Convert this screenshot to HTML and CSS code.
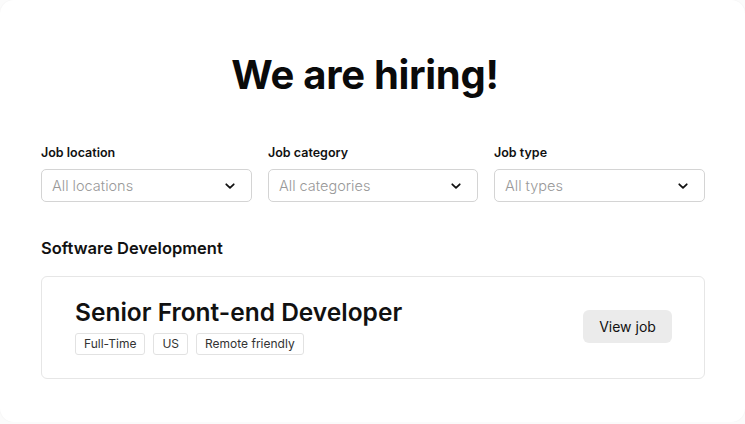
FILE: index.html
```html
<!DOCTYPE html>
<html>
<head>
<meta charset="utf-8">
<link rel="stylesheet" href="styles.css">
</head>
<body>
<div class="page">
  <h1 class="title">We are hiring!</h1>
  <div class="filters">
    <div class="field">
      <label class="label">Job location</label>
      <div class="select"><span>All locations</span>
        <svg class="chev" width="10" height="6" viewBox="0 0 10 6"><path d="M1.3 1.3l3.7 3.5 3.7-3.5" fill="none" stroke="#111" stroke-width="1.8" stroke-linecap="round" stroke-linejoin="round"/></svg>
      </div>
    </div>
    <div class="field">
      <label class="label">Job category</label>
      <div class="select"><span>All categories</span>
        <svg class="chev" width="10" height="6" viewBox="0 0 10 6"><path d="M1.3 1.3l3.7 3.5 3.7-3.5" fill="none" stroke="#111" stroke-width="1.8" stroke-linecap="round" stroke-linejoin="round"/></svg>
      </div>
    </div>
    <div class="field">
      <label class="label">Job type</label>
      <div class="select"><span>All types</span>
        <svg class="chev" width="10" height="6" viewBox="0 0 10 6"><path d="M1.3 1.3l3.7 3.5 3.7-3.5" fill="none" stroke="#111" stroke-width="1.8" stroke-linecap="round" stroke-linejoin="round"/></svg>
      </div>
    </div>
  </div>
  <h2 class="section">Software Development</h2>
  <div class="job">
    <div class="job-info">
      <h3 class="job-title">Senior Front-end Developer</h3>
      <div class="tags">
        <span class="tag">Full-Time</span>
        <span class="tag">US</span>
        <span class="tag">Remote friendly</span>
      </div>
    </div>
    <a class="btn">View job</a>
  </div>
</div>
</body>
</html>
```
FILE: styles.css
```css
* { box-sizing: border-box; }
html, body { margin: 0; padding: 0; background: #fbfbfb; }
body { font-family: Inter, "Liberation Sans", sans-serif; color: #111; }
.page {
  width: 745px;
  height: 422px;
  background: #fff;
  border-radius: 14px;
  box-shadow: 0 0 2px rgba(0,0,0,0.05);
  padding: 52px 40px 0 41px;
}
.title {
  margin: 0;
  padding-right: 16px;
  text-align: center;
  font-size: 40px;
  font-weight: 700;
  letter-spacing: -0.3px;
  line-height: 46px;
  color: #0a0a0a;
}
.filters {
  display: grid;
  grid-template-columns: 211px 210px 211px;
  column-gap: 16px;
  margin-top: 47px;
}
.label {
  display: block;
  font-size: 12.5px;
  font-weight: 600;
  line-height: 16px;
  margin-bottom: 8px;
}
.select {
  height: 33px;
  border: 1px solid #d4d4d4;
  border-radius: 5px;
  display: flex;
  align-items: center;
  justify-content: space-between;
  padding: 0 16px 0 10px;
  font-size: 14.5px;
  font-weight: 300;
  color: #999;
}
.section {
  margin: 36px 0 0;
  font-size: 16.5px;
  font-weight: 600;
  line-height: 20px;
}
.job {
  margin-top: 18px;
  height: 103px;
  border: 1px solid #e6e6e6;
  border-radius: 6px;
  display: flex;
  align-items: center;
  justify-content: space-between;
  padding: 0 32px 3px 33px;
}
.job-title {
  margin: 0;
  font-size: 24.5px;
  font-weight: 600;
  line-height: 28px;
}
.tags { display: flex; gap: 8px; margin-top: 7px; }
.tag {
  border: 1px solid #e2e2e2;
  border-radius: 3px;
  font-size: 12px;
  line-height: 20px;
  padding: 0 8px;
  color: #333;
}
.btn {
  background: #ebebeb;
  border-radius: 6px;
  height: 33px;
  width: 89px;
  display: flex;
  align-items: center;
  justify-content: center;
  font-size: 14px;
  color: #111;
  margin-top: 1px;
}
```
